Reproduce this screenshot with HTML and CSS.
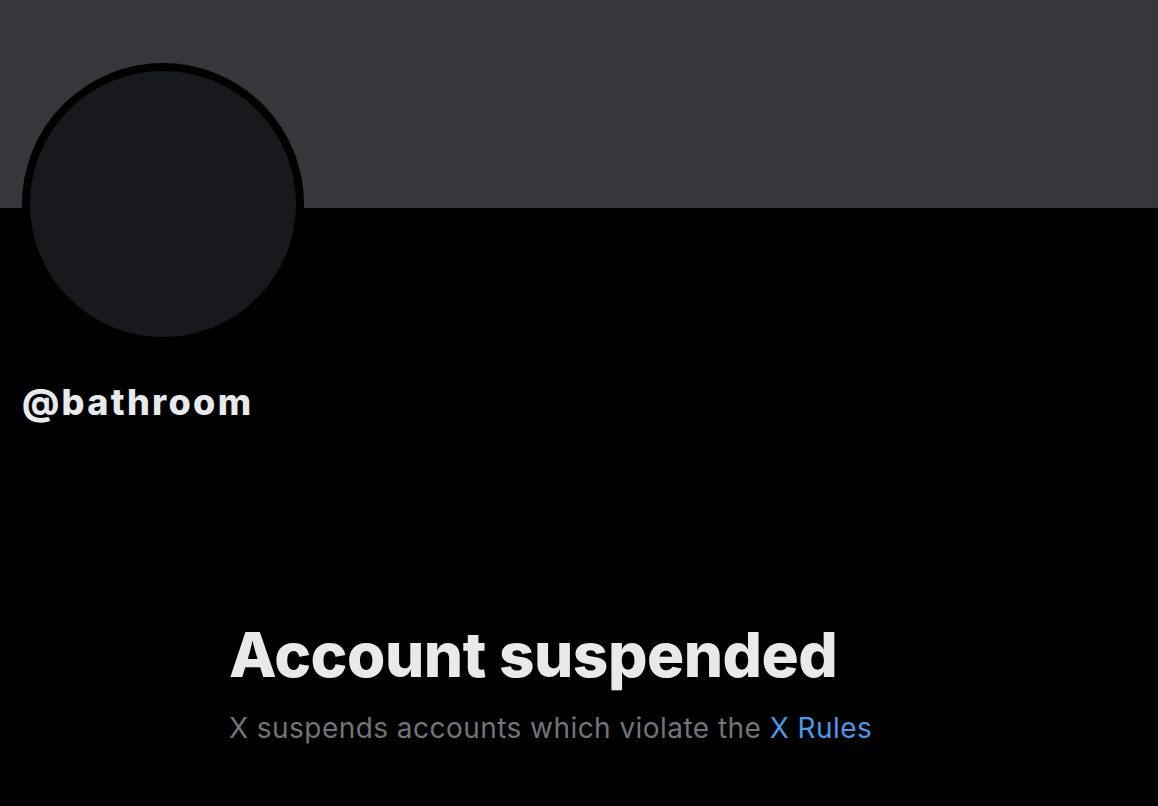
FILE: index.html
```html
<!DOCTYPE html>
<html lang="en">
<head>
  <meta charset="UTF-8">
  <meta name="viewport" content="width=device-width, initial-scale=1.0">
  <title>@bathroom / X</title>
  <link rel="stylesheet" href="styles.css">
</head>
<body>
  <div class="profile">
    <div class="banner"></div>
    <div class="profile-info">
      <div class="avatar"></div>
      <div class="handle">@bathroom</div>
    </div>
    <div class="notice">
      <h1>Account suspended</h1>
      <p>X suspends accounts which violate the <a href="#">X Rules</a></p>
    </div>
  </div>
</body>
</html>
```

FILE: styles.css
```css
body, html {
  margin: 0;
  padding: 0;
  background-color: #000;
  font-family: Inter, "Noto Sans", Arial, sans-serif;
  color: #e7e9ea;
}

.profile {
  width: 1158px;
  height: 806px;
  overflow: hidden;
}

.banner {
  height: 208px;
  background-color: #36373b;
}

.profile-info {
  padding-left: 22px;
}

.avatar {
  width: 266px;
  height: 266px;
  margin-top: -145px;
  border: 8px solid #000;
  border-radius: 50%;
  background-color: #18191d;
}

.handle {
  margin-top: 35px;
  font-size: 36px;
  font-weight: 800;
  line-height: 44px;
  letter-spacing: 2.3px;
}

.notice {
  padding-left: 229px;
  margin-top: 193px;
}

.notice h1 {
  margin: 0;
  font-size: 62px;
  font-weight: 800;
  line-height: 76px;
  letter-spacing: -0.5px;
}

.notice p {
  margin: 17px 0 0;
  font-size: 28px;
  line-height: 36px;
  color: #737479;
  letter-spacing: 0.45px;
}

.notice a {
  color: #4a99e9;
  text-decoration: none;
}
```
